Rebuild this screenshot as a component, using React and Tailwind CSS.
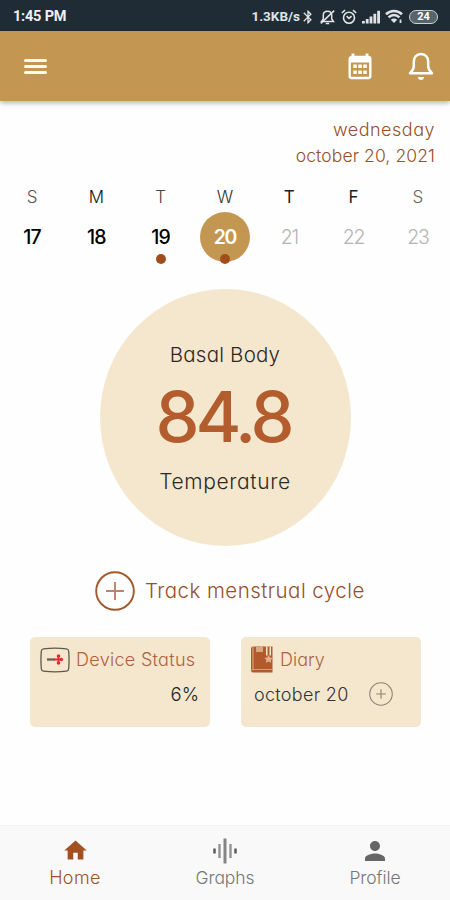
import React from "react";
import { MdHome, MdPerson, MdBluetooth } from "react-icons/md";

const weekDays = [
  { letter: "S", day: 17, letterClass: "text-[#555] font-light" },
  { letter: "M", day: 18, letterClass: "text-[#111] font-light" },
  { letter: "T", day: 19, letterClass: "text-[#444] font-light", hasDot: true },
  { letter: "W", day: 20, letterClass: "text-[#333] font-light", hasDot: true, selected: true },
  { letter: "T", day: 21, letterClass: "text-[#222] font-normal", disabled: true },
  { letter: "F", day: 22, letterClass: "text-[#222] font-normal", disabled: true },
  { letter: "S", day: 23, letterClass: "text-[#666] font-light", disabled: true },
];

const MuteIcon = () => (
  <svg width="17" height="16" viewBox="0 0 17 16" fill="none" stroke="#dfe3e6" strokeWidth="1.5">
    <path d="M2.5 12.5h12l-1.8-2.5V6.2C12.7 3.8 11 2.3 8.5 2.3S4.3 3.8 4.3 6.2V10z" />
    <path d="M6.8 14.5h3.4M15.2 1.6 1.8 14.4" />
  </svg>
);

const AlarmIcon = () => (
  <svg width="16" height="16" viewBox="0 0 16 16" fill="none" stroke="#dfe3e6" strokeWidth="1.6">
    <circle cx="8" cy="8.8" r="5.5" />
    <path d="m.8 4 3.2-2.8M15.2 4 12 1.2M5.6 7.2 8 9.4l2.6-2.2" />
  </svg>
);

const SignalIcon = () => (
  <svg width="18" height="14" viewBox="0 0 18 14" fill="#dfe3e6">
    <rect x="0" y="11" width="2.8" height="2.5" />
    <rect x="3.8" y="9" width="2.8" height="4.5" />
    <rect x="7.6" y="6.5" width="2.8" height="7" />
    <rect x="11.4" y="3.8" width="2.8" height="9.7" />
    <rect x="15.2" y="0.8" width="2.8" height="12.7" />
  </svg>
);

const WifiIcon = () => (
  <svg width="19" height="15" viewBox="0 0 19 15" fill="none" stroke="#dfe3e6" strokeWidth="2.6">
    <path d="M1 5.2c4.6-4.3 11.4-4.3 16 0M3.6 8.4c3.2-3 7.6-3 10.8 0" />
    <path d="M5.8 10.7c2-1.7 4.4-1.7 6.4 0L9 14z" fill="#dfe3e6" stroke="none" />
    <path d="M15.5 10.5V14" strokeWidth="1.8" />
  </svg>
);

const BatteryIcon = () => (
  <div className="flex h-[14px] w-[29px] items-center justify-center rounded-full border-[1.5px] border-[#cdd2d5] bg-[#59636a] text-[11px] font-bold leading-none text-white">
    24
  </div>
);

const CalendarIcon = () => (
  <svg width="24" height="27" viewBox="0 0 24 27">
    <path d="M5 .5v4M19 .5v4" stroke="#fff" strokeWidth="2.8" />
    <rect x="1.7" y="4" width="20.6" height="21" rx="2" fill="none" stroke="#fff" strokeWidth="2.4" />
    <path d="M1 4h22v5.5H1z" fill="#fff" />
    <g fill="#fff">
      <path d="M5.3 11.5h3.5V15H5.3zM10.3 11.5h3.5V15h-3.5zM15.3 11.5h3.5V15h-3.5z" />
      <path d="M5.3 17.5h3.5V21H5.3zM10.3 17.5h3.5V21h-3.5zM15.3 17.5h3.5V21h-3.5z" />
    </g>
  </svg>
);

const BellIcon = () => (
  <svg width="26" height="30" viewBox="0 0 26 30" fill="none" stroke="#fff" strokeWidth="2.5">
    <path d="M2 22.3h22c-2.8-2.4-3.8-4.4-3.8-7.3v-4.3c0-4.4-2.6-7.6-7.2-7.6s-7.2 3.2-7.2 7.6V15c0 2.9-1 4.9-3.8 7.3z" strokeLinejoin="round" />
    <path d="M9.8 26h6.4c-.4 2-1.6 2.9-3.2 2.9S10.2 28 9.8 26z" fill="#fff" stroke="none" />
  </svg>
);

const DeviceIcon = () => (
  <svg width="30" height="26" viewBox="0 0 30 26" fill="none">
    <path d="M3.5 1.8Q15 .3 26.5 1.8q2 .3 2.2 2.4.7 8.8 0 17.6-.2 2.1-2.2 2.4-11.5 1.5-23 0-2-.3-2.2-2.4-.7-8.800 0-17.6.2-2.1 2.2-2.4z" stroke="#5e584c" strokeWidth="1.3" />
    <path d="M7 12.5h8" stroke="#685c55" strokeWidth="2.3" />
    <path d="M14 12.5h8M18.5 9v7" stroke="#e52a35" strokeWidth="2" />
    <circle cx="18.5" cy="9" r="1.8" fill="#e52a35" />
    <circle cx="18.5" cy="16" r="1.8" fill="#e52a35" />
    <circle cx="21.5" cy="12.5" r="1.7" fill="#e52a35" />
  </svg>
);

const DiaryIcon = () => (
  <svg width="24" height="27" viewBox="0 0 24 27">
    <path d="M1 2.5Q1 .5 3 .5h19.5v26H3q-2 0-2-2z" fill="#b35a2c" />
    <path d="M3 .5v23" stroke="#dcae88" strokeWidth="1" />
    <path d="M1 25q0-1.5 2-1.5h19.5" fill="none" stroke="#d79c74" strokeWidth="1" />
    <path d="M6 1h7v5H6z" fill="#d9a780" />
    <path d="M16 .5h1.5v9H16zM19.5.5H21v9h-1.5z" fill="#f4e7ce" />
    <path d="m18.5 9 1.3 2.5 3 .5-2 2 .4 2.8-2.7-1.3-2.6 1.3.5-2.8-2-2 2.8-.5z" fill="#dfb28e" />
  </svg>
);

const PlusCircle = ({ size, color, plusColor, strokeWidth, arm }) => (
  <svg width={size} height={size} viewBox="0 0 40 40" fill="none" strokeWidth={strokeWidth}>
    <circle cx="20" cy="20" r="18.8" stroke={color} />
    <path d={`M${20 - arm} 20h${arm * 2}M20 ${20 - arm}v${arm * 2}`} stroke={plusColor || color} />
  </svg>
);

const GraphIcon = () => (
  <svg width="24" height="26" viewBox="0 0 24 26" fill="none" strokeWidth="2.4">
    <path d="M1.5 10.5v5M22.5 10.5v5" stroke="#555" />
    <path d="M6.5 6v14M17.5 6v14" stroke="#949494" />
    <path d="M12 .5v25" stroke="#858585" strokeWidth="3" />
  </svg>
);

const StatusBar = () => (
  <div className="flex h-[31px] items-center justify-between bg-[#202c35] pb-px pl-[13px] pr-3 pt-[3px] font-['Roboto',sans-serif] text-white">
    <span className="text-[14.5px] font-bold tracking-[-0.2px] text-[#edf0f2]">1:45 PM</span>
    <div className="flex items-center">
      <span className="text-[13.5px] font-bold text-[#dfe3e6]">1.3KB/s</span>
      <MdBluetooth className="h-4 w-4 text-[#dfe3e6]" />
      <div className="ml-[3px] flex items-center gap-[5px]">
        <MuteIcon />
        <AlarmIcon />
        <SignalIcon />
        <WifiIcon />
        <BatteryIcon />
      </div>
    </div>
  </div>
);

const Header = () => (
  <header className="relative flex h-[70px] items-center justify-between bg-[#c39751] pl-6 pr-4 shadow-[0_2px_5px_rgba(0,0,0,0.3)]">
    <div className="flex w-[23px] flex-col gap-[3px]">
      <span className="h-[3px] rounded-sm bg-[#fffaf0]"></span>
      <span className="h-[3px] rounded-sm bg-[#fffaf0]"></span>
      <span className="h-[3px] rounded-sm bg-[#fffaf0]"></span>
    </div>
    <div className="flex items-center gap-[36px]">
      <CalendarIcon />
      <BellIcon />
    </div>
  </header>
);

const WeekDay = ({ letter, day, letterClass, hasDot, selected, disabled }) => {
  let dayClass = "text-black font-medium tracking-[-0.8px]";
  if (selected) dayClass = "text-white font-semibold tracking-[-1.3px]";
  if (disabled) dayClass = "text-[#b4b4b4] font-light tracking-[-1.2px]";

  return (
    <div className="flex flex-col items-center">
      <span className={`h-[26px] text-[17px] leading-[26px] ${letterClass}`}>{letter}</span>
      <div
        className={`relative mt-[2px] flex h-[50px] w-[50px] items-center justify-center rounded-full pt-px text-[19.5px] ${
          selected ? "bg-[#c39751]" : ""
        } ${dayClass}`}
      >
        {day}
        {hasDot && (
          <span className="absolute -bottom-[2px] left-5 h-[10px] w-[10px] rounded-full bg-[#a04e1c]"></span>
        )}
      </div>
    </div>
  );
};

const NavItem = ({ icon, label, active }) => (
  <div
    className={`flex flex-col items-center font-light ${
      active ? "text-[18px] tracking-[0.4px] text-[#a45122]" : "text-[17.5px] tracking-[-0.1px] text-[#777]"
    }`}
  >
    <div className="flex h-[27px] items-center">{icon}</div>
    <span className="leading-[28px]">{label}</span>
  </div>
);

const App = () => {
  return (
    <div className="flex h-[900px] w-[450px] flex-col overflow-hidden bg-[#fefefe] font-['Inter',sans-serif] [font-feature-settings:'cv11']">
      <StatusBar />
      <Header />

      <main className="flex flex-1 flex-col">
        {/* Date */}
        <div className="flex flex-col items-end pr-[15px] pt-4 text-[17.5px] font-light leading-[26px] text-[#96502a]">
          <span className="text-[18px] tracking-[0.5px]">wednesday</span>
          <span className="tracking-[0.1px]">october 20, 2021</span>
        </div>

        <div className="mt-[15px] grid grid-cols-7">
          {weekDays.map((item) => (
            <WeekDay key={item.day} {...item} />
          ))}
        </div>

        {/* Temperature */}
        <div className="mt-[27px] flex h-[257px] w-[251px] flex-col items-center self-center rounded-[50%] bg-[#f4e7ce] text-[20.5px] text-[#2d2923]">
          <span className="mt-[53px] font-light leading-[26px] tracking-[0.2px]">Basal Body</span>
          <span className="mt-[12px] pr-1 text-[70px] font-medium leading-[74px] tracking-[-4px] text-[#b35d2e]">
            84.8
          </span>
          <span className="mt-[15px] text-[21px] font-light leading-[26px] tracking-[0.6px]">Temperature</span>
        </div>

        <button className="mt-[25px] flex h-10 items-center gap-[10px] pl-[95px] text-[20.5px] font-light tracking-[0.45px] text-[#96502a]">
          <PlusCircle size={40} color="#a2582b" plusColor="#b98468" strokeWidth={1.9} arm={9} />
          <span>Track menstrual cycle</span>
        </button>

        {/* Cards */}
        <div className="mt-[26px] flex gap-[31px] pl-[30px]">
          <div className="h-[90px] w-[180px] rounded-[5px] bg-[#f4e7ce] pl-[10px] pr-[11px] pt-[9px]">
            <div className="flex h-[27px] items-center gap-[6px] text-[#ad623f]">
              <DeviceIcon />
              <span className="-mt-px whitespace-nowrap text-[18px] font-light tracking-[0.3px]">Device Status</span>
            </div>
            <p className="mt-[8px] text-right text-[18.5px] font-light leading-[26px] text-[#222]">6%</p>
          </div>
          <div className="h-[90px] w-[180px] rounded-[5px] bg-[#f4e7ce] pl-[9px] pr-[28px] pt-[9px]">
            <div className="flex h-[27px] items-center gap-[6px] text-[#ad623f]">
              <DiaryIcon />
              <span className="-mt-px text-[18px] font-light">Diary</span>
            </div>
            <div className="mt-[8px] flex h-[26px] items-center justify-between pl-1 text-[#333]">
              <span className="text-[18px] font-light tracking-[0.3px]">october 20</span>
              <PlusCircle size={24} color="#8b8271" strokeWidth={1.8} arm={8} />
            </div>
          </div>
        </div>
      </main>

      <nav className="grid h-[75px] grid-cols-3 border-t border-[#f3f3f3] bg-[#f9f9f9] pt-[11px]">
        <NavItem active label="Home" icon={<MdHome className="h-[27px] w-[27px]" />} />
        <NavItem label="Graphs" icon={<GraphIcon />} />
        <NavItem label="Profile" icon={<MdPerson className="h-[30px] w-[30px] text-[#666]" />} />
      </nav>
    </div>
  );
};

export default App;
